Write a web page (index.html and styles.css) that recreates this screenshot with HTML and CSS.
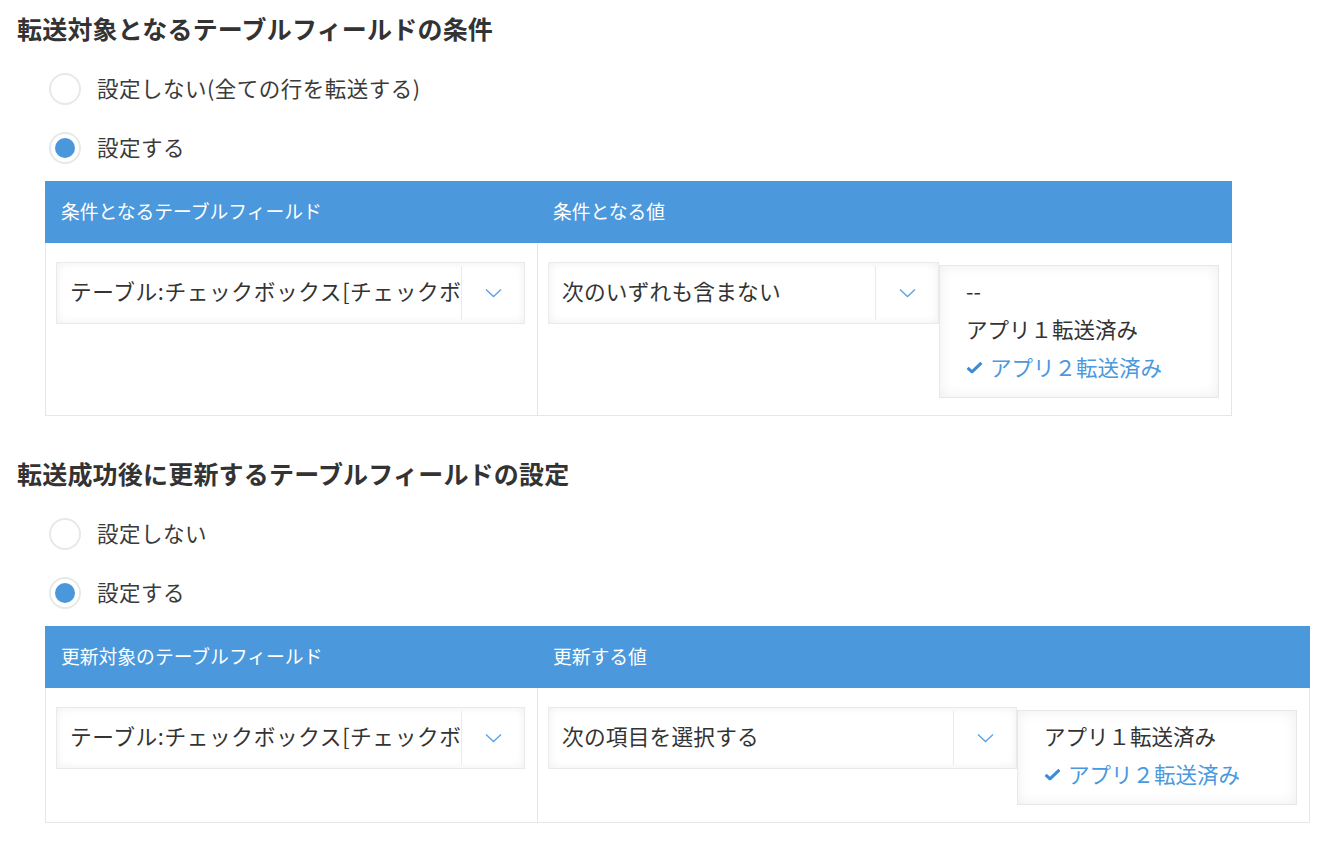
FILE: index.html
```html
<!DOCTYPE html>
<html lang="ja">
<head>
<meta charset="utf-8">
<title>設定</title>
<link rel="stylesheet" href="styles.css">
</head>
<body>
<div class="page">
  <section class="section">
    <h2 class="title">転送対象となるテーブルフィールドの条件</h2>
    <div class="radios">
      <div class="radio-row"><span class="radio"></span><span class="radio-label">設定しない(全ての行を転送する)</span></div>
      <div class="radio-row"><span class="radio checked"></span><span class="radio-label">設定する</span></div>
    </div>
    <div class="tbl">
      <div class="th">条件となるテーブルフィールド</div>
      <div class="th">条件となる値</div>
      <div class="td td-first">
        <div class="select select-wide">
          <div class="select-text select-text-field">テーブル:チェックボックス[チェックボ</div>
          <div class="select-btn"><svg width="17" height="10" viewBox="0 0 17 10"><polyline points="1,1.5 8.5,8.5 16,1.5" fill="none" stroke="#5da3e2" stroke-width="1.4"/></svg></div>
        </div>
      </div>
      <div class="td td-second">
        <div class="select select-narrow">
          <div class="select-text">次のいずれも含まない</div>
          <div class="select-btn"><svg width="17" height="10" viewBox="0 0 17 10"><polyline points="1,1.5 8.5,8.5 16,1.5" fill="none" stroke="#5da3e2" stroke-width="1.4"/></svg></div>
        </div>
        <div class="list">
          <div class="item">--</div>
          <div class="item">アプリ１転送済み</div>
          <div class="item selected"><svg class="check" width="17" height="13" viewBox="0 0 17 13"><path d="M1.6 6.8 L6 10.8 L15.4 1.8" fill="none" stroke="#3c8bd6" stroke-width="3" stroke-linejoin="round"/></svg>アプリ２転送済み</div>
        </div>
      </div>
    </div>
  </section>

  <section class="section section-2">
    <h2 class="title">転送成功後に更新するテーブルフィールドの設定</h2>
    <div class="radios">
      <div class="radio-row"><span class="radio"></span><span class="radio-label">設定しない</span></div>
      <div class="radio-row"><span class="radio checked"></span><span class="radio-label">設定する</span></div>
    </div>
    <div class="tbl">
      <div class="th">更新対象のテーブルフィールド</div>
      <div class="th">更新する値</div>
      <div class="td td-first">
        <div class="select select-wide">
          <div class="select-text select-text-field">テーブル:チェックボックス[チェックボ</div>
          <div class="select-btn"><svg width="17" height="10" viewBox="0 0 17 10"><polyline points="1,1.5 8.5,8.5 16,1.5" fill="none" stroke="#5da3e2" stroke-width="1.4"/></svg></div>
        </div>
      </div>
      <div class="td td-second">
        <div class="select select-wide">
          <div class="select-text">次の項目を選択する</div>
          <div class="select-btn"><svg width="17" height="10" viewBox="0 0 17 10"><polyline points="1,1.5 8.5,8.5 16,1.5" fill="none" stroke="#5da3e2" stroke-width="1.4"/></svg></div>
        </div>
        <div class="list">
          <div class="item">アプリ１転送済み</div>
          <div class="item selected"><svg class="check" width="17" height="13" viewBox="0 0 17 13"><path d="M1.6 6.8 L6 10.8 L15.4 1.8" fill="none" stroke="#3c8bd6" stroke-width="3" stroke-linejoin="round"/></svg>アプリ２転送済み</div>
        </div>
      </div>
    </div>
  </section>
</div>
</body>
</html>
```
FILE: styles.css
```css
html, body {
  margin: 0;
  padding: 0;
  background: #fff;
}
body {
  font-family: "Noto Sans CJK JP", "Noto Sans", sans-serif;
  color: #333;
}
.page {
  padding: 10px 0 0 17px;
}
.section-2 {
  margin-top: 39px;
}
.title {
  margin: 0;
  font-size: 25px;
  line-height: 36px;
  font-weight: bold;
  color: #333;
  letter-spacing: 0.2px;
}
.radios {
  margin: 14px 0 0 32px;
}
.radio-row {
  display: flex;
  align-items: center;
  height: 59px;
}
.radio {
  box-sizing: border-box;
  width: 32px;
  height: 32px;
  margin-top: -2px;
  border: 2px solid #e6e9ea;
  border-radius: 50%;
  display: flex;
  align-items: center;
  justify-content: center;
  flex: none;
}
.radio.checked::after {
  content: "";
  width: 20px;
  height: 20px;
  border-radius: 50%;
  background: #4a97dc;
}
.radio-label {
  margin-left: 16px;
  margin-top: -3px;
  font-size: 21.5px;
  line-height: 30px;
  letter-spacing: 0.5px;
  color: #3a3a3a;
}
.tbl {
  margin: 3px 0 0 28px;
  display: grid;
  grid-template-columns: 492px auto;
  width: max-content;
}
.th {
  background: #4b98dc;
  color: #fff;
  height: 62px;
  line-height: 60px;
  font-size: 18.8px;
  padding-left: 16px;
}
.td {
  box-sizing: border-box;
  border-bottom: 1px solid #e3e7e8;
  padding: 19px 12px 17px 10px;
  display: flex;
  align-items: flex-start;
}
.td-first {
  border-left: 1px solid #e3e7e8;
}
.td-second {
  border-left: 1px solid #e3e7e8;
  border-right: 1px solid #e3e7e8;
}
.select {
  box-sizing: border-box;
  height: 62px;
  border: 1px solid #e8ebec;
  background: #fff;
  box-shadow: inset 0 0 10px #efefef;
  display: flex;
  flex: none;
}
.select-wide {
  width: 469px;
}
.select-narrow {
  width: 391px;
}
.select-text {
  flex: 1;
  min-width: 0;
  overflow: hidden;
  white-space: nowrap;
  padding-left: 13px;
  font-size: 21.7px;
  line-height: 56px;
  letter-spacing: 0.2px;
  color: #333;
}
.select-text-field {
  letter-spacing: 0.6px;
}
.select-btn {
  flex: none;
  width: 62px;
  margin: 3px 0;
  border-left: 1px solid #e8ebec;
  display: flex;
  align-items: center;
  justify-content: center;
}
.list {
  box-sizing: border-box;
  width: 280px;
  margin-top: 3px;
  border: 1px solid #e6e9ea;
  background: #fff;
  box-shadow: inset 0 0 14px #eeeeee;
  padding: 6px 0 11px 26px;
  flex: none;
}
.item {
  height: 38px;
  line-height: 34px;
  font-size: 21.5px;
  color: #333;
  display: flex;
  align-items: center;
  white-space: nowrap;
}
.item.selected {
  color: #4a98de;
}
.check {
  margin-right: 7px;
  flex: none;
}
```
